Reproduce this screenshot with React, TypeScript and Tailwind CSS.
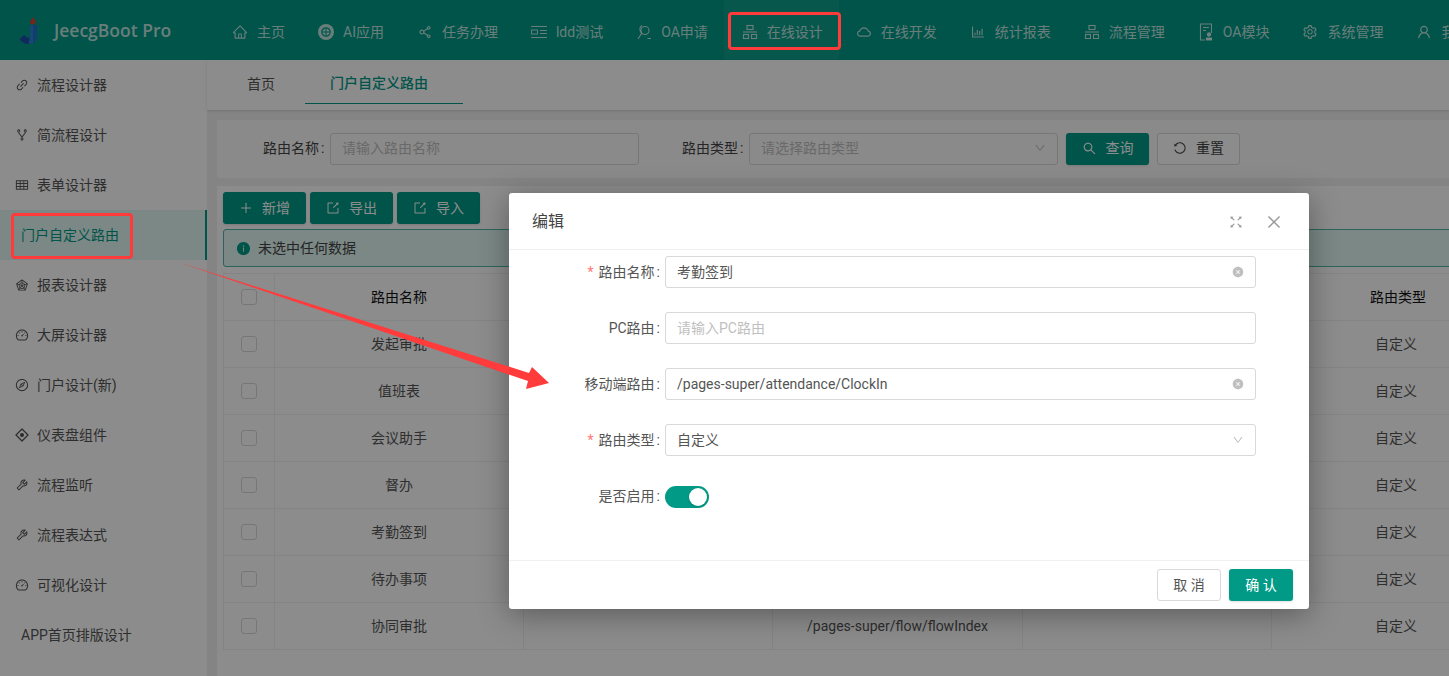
import type { ReactNode } from 'react';
import {
  AiOutlineHome,
  AiOutlineShareAlt,
  AiOutlineCloud,
  AiOutlineBarChart,
  AiOutlineSetting,
  AiOutlineUser,
  AiOutlineFork,
  AiOutlineTable,
  AiOutlineRadarChart,
  AiOutlineDashboard,
  AiOutlineCompass,
  AiOutlineTool,
  AiOutlineSearch,
  AiOutlineReload,
  AiOutlinePlus,
  AiOutlineExport,
  AiFillInfoCircle,
  AiOutlineClose,
  AiOutlineDown,
  AiFillCloseCircle,
  AiOutlineLink,
  AiOutlineFullscreen,
} from 'react-icons/ai';

const FONT = "[font-family:'Roboto','Noto_Sans_CJK_SC',sans-serif]";

const AiBadge = () => (
  <svg width="16" height="16" viewBox="0 0 16 16">
    <circle cx="8" cy="8" r="8" fill="currentColor" />
    <circle cx="8" cy="8" r="4.2" fill="none" stroke="#009a87" strokeWidth="1.2" />
    <path d="M8 4v8M4 8h8" stroke="#009a87" strokeWidth="1" />
  </svg>
);

const LinesIcon = () => (
  <svg width="16" height="16" viewBox="0 0 16 16" fill="none" stroke="currentColor" strokeWidth="1">
    <path d="M0 2.5h16M0 13.5h16" />
    <rect x="0.5" y="6" width="6" height="4" />
    <path d="M9 6.5h7M9 9.5h7" />
  </svg>
);

const PersonSearchIcon = () => (
  <svg width="16" height="16" viewBox="0 0 16 16" fill="none" stroke="currentColor" strokeWidth="1.1">
    <circle cx="9" cy="6.5" r="4" />
    <path d="M6 1.5C3.5 3 3 6 5.5 9.5L2 15M11.5 14.5h3.5" />
  </svg>
);

const DocUserIcon = () => (
  <svg width="16" height="18" viewBox="0 0 16 18" fill="none" stroke="currentColor" strokeWidth="1.1">
    <path d="M7 17H2.5V1h11v9" />
    <path d="M5 4.5h6M5 7.5h3" />
    <circle cx="11" cy="11.5" r="1.6" fill="currentColor" />
    <path d="M8.5 17v-2h5v2Z" fill="currentColor" />
  </svg>
);

const TreeIcon = () => (
  <svg width="16" height="16" viewBox="0 0 16 16" fill="none" stroke="currentColor" strokeWidth="1.1">
    <rect x="5" y="1.5" width="6" height="4" />
    <path d="M1 8h14" />
    <rect x="1.5" y="10.5" width="5" height="4" />
    <rect x="9.5" y="10.5" width="5" height="4" />
  </svg>
);

const DiamondIcon = () => (
  <svg width="14" height="14" viewBox="0 0 14 14" fill="none" stroke="currentColor" strokeWidth="1.3">
    <path d="M7 1 13 7 7 13 1 7Z" strokeLinejoin="round" />
    <circle cx="7" cy="7" r="1.4" fill="currentColor" />
  </svg>
);

const Logo = () => (
  <svg width="19" height="27" viewBox="0 0 19 27">
    <path d="M14 0c1.5 2 2.500 3.500 2.500 5s-1 2.500-2.500 2.500-3-1-3-2.500 2-2.500 3-5Z" fill="#d9442c" />
    <path d="M11 8h7v10c0 5-3 9-8 9-4 0-7-2-9.500-5l5-4c1 2 2.500 3 4 3 1 0 1.500-1 1.500-3Z" fill="#1f6fd1" />
    <path d="M5.500 18 .5 22c2 3 5 5 9 5l1-6c-2 0-4-1-5-3Z" fill="#1d4fa8" />
    <path d="M11 8h3v18c-1 .6-2.500 1-4 1l1-6Z" fill="#2a86c9" />
  </svg>
);

const navItems: { label: string; icon: ReactNode; active?: boolean }[] = [
  { label: '主页', icon: <AiOutlineHome size={18} /> },
  { label: 'AI应用', icon: <AiBadge /> },
  { label: '任务办理', icon: <AiOutlineShareAlt size={18} /> },
  { label: 'ldd测试', icon: <LinesIcon /> },
  { label: 'OA申请', icon: <PersonSearchIcon /> },
  { label: '在线设计', icon: <TreeIcon />, active: true },
  { label: '在线开发', icon: <AiOutlineCloud size={18} /> },
  { label: '统计报表', icon: <AiOutlineBarChart size={18} /> },
  { label: '流程管理', icon: <TreeIcon /> },
  { label: 'OA模块', icon: <DocUserIcon /> },
  { label: '系统管理', icon: <AiOutlineSetting size={18} /> },
  { label: '我的', icon: <AiOutlineUser size={18} /> },
];

const sideItems: { label: string; icon?: ReactNode; active?: boolean }[] = [
  { label: '流程设计器', icon: <AiOutlineLink size={16} /> },
  { label: '简流程设计', icon: <AiOutlineFork size={16} /> },
  { label: '表单设计器', icon: <AiOutlineTable size={16} /> },
  { label: '门户自定义路由', active: true },
  { label: '报表设计器', icon: <AiOutlineRadarChart size={16} /> },
  { label: '大屏设计器', icon: <AiOutlineDashboard size={16} /> },
  { label: '门户设计(新)', icon: <AiOutlineCompass size={16} /> },
  { label: '仪表盘组件', icon: <DiamondIcon /> },
  { label: '流程监听', icon: <AiOutlineTool size={16} /> },
  { label: '流程表达式', icon: <AiOutlineTool size={16} /> },
  { label: '可视化设计', icon: <AiOutlineDashboard size={16} /> },
  { label: 'APP首页排版设计' },
];

const rows = ['发起审批', '值班表', '会议助手', '督办', '考勤签到', '待办事项', '协同审批'];

const Checkbox = () => <span className="h-4 w-4 rounded-[3px] border border-[#d9d9d9] bg-white" />;

const Cell = ({ children, head }: { children?: ReactNode; head?: boolean }) => (
  <div className={`flex items-center justify-center border-r border-b border-[#f0f0f0] ${head ? 'text-[#111]' : 'text-[#555]'}`}>
    {children}
  </div>
);

const TableRow = ({ name, path, head, type }: { name: string; path?: string; head?: boolean; type: string }) => (
  <div className="grid h-[47px] grid-cols-[51px_249px_249px_250px_249px_249px]">
    <Cell><Checkbox /></Cell>
    <Cell head={head}>{name}</Cell>
    <Cell />
    <Cell>{path}</Cell>
    <Cell />
    <Cell head={head}>{head ? <span className="pl-1">{type}</span> : type}</Cell>
  </div>
);

const ToolButton = ({ icon, label }: { icon: ReactNode; label: string }) => (
  <button className="flex h-8 w-[83px] items-center justify-center gap-[9px] rounded-[3px] bg-[#009a87] text-white shadow-sm">
    {icon}
    {label}
  </button>
);

const FormRow = ({ label, required, children }: { label: string; required?: boolean; children: ReactNode }) => (
  <div className="flex h-8 items-center">
    <label className="flex w-[156px] justify-end pr-[5px] text-[#555]">
      {required && <span className="mr-[5px] text-[#ff7875]">*</span>}
      {label}
      <span className="ml-[2px]">:</span>
    </label>
    {children}
  </div>
);

const FormInput = ({ value, placeholder, clear, arrow }: { value?: string; placeholder?: string; clear?: boolean; arrow?: boolean }) => (
  <div className="flex h-8 w-[591px] items-center justify-between rounded-[3px] border border-[#d9d9d9] px-[11px]">
    <span className={value ? 'text-[#555]' : 'text-[#bfbfbf]'}>{value || placeholder}</span>
    {clear && <AiFillCloseCircle size={12} className="text-[#bfbfbf]" />}
    {arrow && <AiOutlineDown size={12} className="text-[#bfbfbf]" />}
  </div>
);

export default function App() {
  return (
    <div className={`relative flex h-[676px] w-[1449px] flex-col overflow-hidden bg-[#f0f0f0] text-[14px] leading-[22px] ${FONT}`}>
      <header className="flex h-[60px] shrink-0 items-center bg-[#009a87] text-white/75">
        <div className="flex w-[215px] shrink-0 items-center pl-[19px]">
          <Logo />
          <span className="ml-[16px] text-[17.5px] font-semibold whitespace-nowrap [font-family:'Open_Sans',sans-serif]">JeecgBoot Pro</span>
        </div>
        {navItems.map((item) => (
          <div
            key={item.label}
            className={`flex h-full shrink-0 items-center gap-[9px] pt-[3px] pr-[16px] whitespace-nowrap ${item.active ? 'bg-white/5 pl-[18px]' : 'pl-[17px]'}`}
          >
            <span className="flex h-4 w-4 items-center justify-center">{item.icon}</span>
            {item.label}
          </div>
        ))}
      </header>

      <div className="flex min-h-0 flex-1">
        <aside className="w-[207px] shrink-0 bg-white text-[#555]">
          {sideItems.map((item) => (
            <div
              key={item.label}
              className={`flex h-[50px] items-center gap-2 ${item.icon ? 'pl-[15px]' : 'pl-[21px]'} ${
                item.active ? 'border-r-2 border-[#009a87] bg-[#e0f8f2] text-[#009a87]' : ''
              }`}
            >
              {item.icon && <span className="flex h-[14px] w-[14px] items-center justify-center">{item.icon}</span>}
              {item.label}
            </div>
          ))}
        </aside>

        <main className="flex min-w-0 flex-1 flex-col">
          <div className="flex h-[50px] shrink-0 bg-white pl-[40px] shadow-sm">
            <span className="mt-[13px] text-[#555]">首页</span>
            <span className="ml-[30px] flex h-[44px] w-[158px] items-center border-b border-[#009a87] pt-[3px] pl-[25px] font-medium text-[#009a87]">
              门户自定义路由
            </span>
          </div>

          <div className="flex min-h-0 flex-1 flex-col pl-[10px] pt-[10px]">
            <section className="flex h-[58px] shrink-0 items-center bg-[#fcfcfc] pl-[46px]">
              <span className="mb-[2px] w-[67px] text-[#444]">路由名称<span className="ml-[2px]">:</span></span>
              <div className="flex h-8 w-[309px] items-center rounded-[3px] border border-[#d9d9d9] px-[11px] pb-[2px] text-[#bfbfbf]">
                请输入路由名称
              </div>
              <span className="mb-[2px] ml-[43px] w-[67px] text-[#444]">路由类型<span className="ml-[2px]">:</span></span>
              <div className="flex h-8 w-[309px] items-center justify-between rounded-[3px] border border-[#d9d9d9] px-[11px] pb-[2px] text-[#bfbfbf]">
                请选择路由类型
                <AiOutlineDown size={12} />
              </div>
              <button className="ml-2 flex h-8 w-[83px] items-center justify-center gap-[9px] rounded-[3px] bg-[#009a87] pb-[2px] text-white shadow-sm">
                <AiOutlineSearch size={15} />
                查询
              </button>
              <button className="ml-2 flex h-8 w-[83px] items-center justify-center gap-[9px] rounded-[3px] border border-[#d9d9d9] bg-white pb-[2px] text-[#444]">
                <AiOutlineReload size={14} className="-scale-x-100" />
                重置
              </button>
            </section>

            <section className="mt-2 flex min-h-0 flex-1 flex-col bg-white px-[6px] pt-[6px]">
              <div className="flex gap-1">
                <ToolButton icon={<AiOutlinePlus size={14} />} label="新增" />
                <ToolButton icon={<AiOutlineExport size={14} />} label="导出" />
                <ToolButton icon={<AiOutlineExport size={14} />} label="导入" />
              </div>
              <div className="mt-[5px] flex h-[38px] w-[1300px] shrink-0 items-center gap-[7px] rounded-[3px] border border-[#4db8aa] bg-[#e0f8f2] pl-[12px] text-[#444]">
                <AiFillInfoCircle size={15} className="text-[#009a87]" />
                未选中任何数据
              </div>
              <div className="mt-[6px] w-[1298px] border-l border-t border-[#f0f0f0]">
                <TableRow head name="路由名称" type="路由类型" />
                {rows.map((name) => (
                  <TableRow
                    key={name}
                    name={name}
                    type="自定义"
                    path={name === '协同审批' ? '/pages-super/flow/flowIndex' : undefined}
                  />
                ))}
              </div>
            </section>
          </div>
        </main>
      </div>

      <div className="absolute inset-0 bg-black/45" />

      <div className="absolute top-[193px] left-[509px] flex h-[416px] w-[800px] flex-col rounded-[3px] bg-white shadow-[0_6px_30px_rgba(0,0,0,0.35)]">
        <div className="flex h-[57px] shrink-0 items-center justify-between border-b border-[#f0f0f0] pt-[2px] pr-[26px] pl-[23px]">
          <span className="text-[16px] text-[#444]">编辑</span>
          <div className="flex items-center gap-[21px] text-[#999]">
            <AiOutlineFullscreen size={16} />
            <AiOutlineClose size={18} />
          </div>
        </div>
        <div className="flex flex-1 flex-col gap-6 pt-[6px]">
          <FormRow label="路由名称" required>
            <FormInput value="考勤签到" clear />
          </FormRow>
          <FormRow label="PC路由">
            <FormInput placeholder="请输入PC路由" />
          </FormRow>
          <FormRow label="移动端路由">
            <FormInput value="/pages-super/attendance/ClockIn" clear />
          </FormRow>
          <FormRow label="路由类型" required>
            <FormInput value="自定义" arrow />
          </FormRow>
          <FormRow label="是否启用">
            <span className="mt-[2px] flex h-[22px] w-[44px] items-center justify-end rounded-full bg-[#009a87] pr-[2px]">
              <span className="h-[18px] w-[18px] rounded-full bg-white shadow" />
            </span>
          </FormRow>
        </div>
        <div className="flex h-[49px] shrink-0 items-center justify-end gap-2 border-t border-[#f0f0f0] pr-4">
          <button className="h-8 w-16 rounded-[3px] border border-[#d9d9d9] text-[#555]">取 消</button>
          <button className="h-8 w-16 rounded-[3px] bg-[#009a87] text-white shadow-sm">确 认</button>
        </div>
      </div>

      {/* red annotations drawn on the screenshot */}
      <div className="absolute top-[12px] left-[728px] h-[38px] w-[113px] rounded-[4px] border-[3px] border-[#ff3b3b]" />
      <div className="absolute top-[213px] left-[11px] h-[46px] w-[122px] rounded-[4px] border-[3px] border-[#ff3b3b]" />
      <svg className="pointer-events-none absolute inset-0" width="1449" height="676">
        <polygon points="178,262 529,373 532,367 549,383 526,389 528,381" fill="#ff3b3b" />
      </svg>
    </div>
  );
}
